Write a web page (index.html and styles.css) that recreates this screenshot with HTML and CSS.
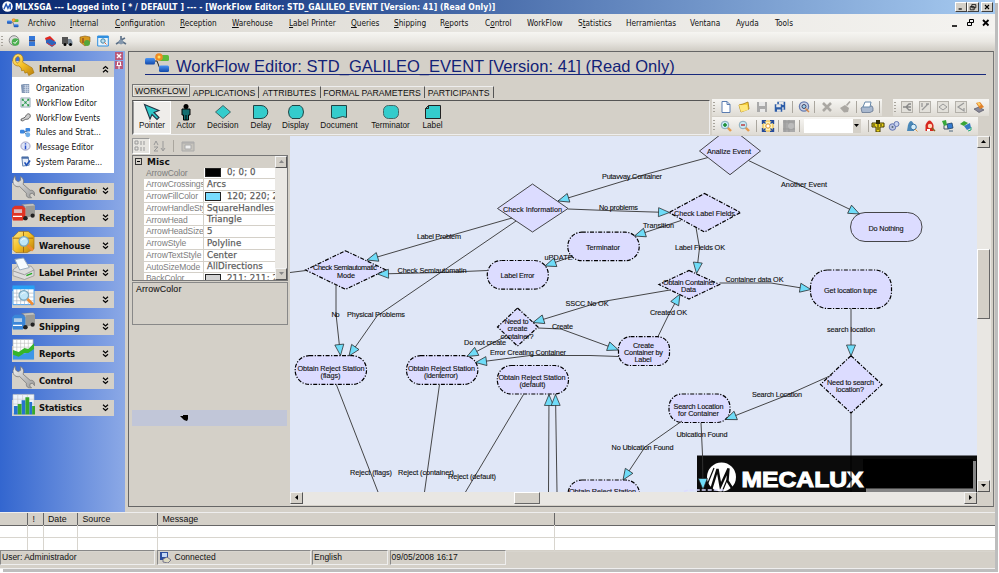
FILE: index.html
```html
<!DOCTYPE html>
<html lang="en">
<head>
<meta charset="utf-8">
<title>MLXSGA</title>
<link rel="stylesheet" href="styles.css">
</head>
<body>
<svg class="defs" width="0" height="0" aria-hidden="true">
  <defs>
    <linearGradient id="gold" x1="0" y1="0" x2="1" y2="1"><stop offset="0" stop-color="#ffe98a"/><stop offset=".5" stop-color="#f4bf25"/><stop offset="1" stop-color="#b87d0c"/></linearGradient>
    <linearGradient id="steel" x1="0" y1="0" x2="1" y2="1"><stop offset="0" stop-color="#f4f4f4"/><stop offset="1" stop-color="#999"/></linearGradient>
    <linearGradient id="blue" x1="0" y1="0" x2="0" y2="1"><stop offset="0" stop-color="#4a95f5"/><stop offset="1" stop-color="#1348a8"/></linearGradient>
    <symbol id="chev" viewBox="0 0 7 8"><path d="M1 .8 3.500 3 6 .8M1 4.300 3.500 6.500 6 4.300" fill="none" stroke="#000" stroke-width="1.200"/></symbol>
    <symbol id="flow" viewBox="0 0 25 20"><path d="M9 8h3l3 8h2" fill="none" stroke="#222" stroke-width="1"/><rect x="0" y="5" width="10" height="6.500" rx="1.500" fill="url(#blue)"/><rect x="14" y="12.500" width="10" height="6.500" rx="1.500" fill="url(#blue)"/><rect x="14" y="2" width="10" height="6" rx="1.500" fill="#5dba3b"/><circle cx="14" cy="4" r="3.800" fill="#f08a24"/><circle cx="14" cy="4" r="1.500" fill="#ffe060"/></symbol>
    <symbol id="wrench" viewBox="0 0 24 24"><path d="M3 0 4 5 6.500 6.500 9 5 9 1C12 3 13 6 11.500 9L19 15.500C22 15 24 17 23.500 21L21.500 18.500 19 19 18.500 21.500 20.500 23.500C16.500 24 14.500 22 15 18.500L8 11.500C4 12.500 1 10 1 5.500Z" fill="url(#steel)" stroke="#777" stroke-width=".8"/></symbol>
    <symbol id="lens" viewBox="0 0 24 24"><circle cx="10" cy="10" r="6" fill="#bfe6f8" stroke="#7aa6bd" stroke-width="1.600"/><path d="m14.500 14.500 7 7" stroke="#ef8b32" stroke-width="3.500"/><path d="m7 9c1-2 3-3 5-2" stroke="#fff" fill="none"/></symbol>
    <symbol id="truck" viewBox="0 0 24 18"><path d="M10 1 22 0 24 2V12L13 15V3Z" fill="#c4c4c0" stroke="#777" stroke-width=".5"/><path d="M14 3 24 2V12L14 15Z" fill="#9a9a96"/><path d="M0 5 3 2.500H11L14 5V15L11 18H1L0 14Z" fill="currentColor"/><path d="M2 6H10.500V10H2Z" fill="#d9e4ee" fill-opacity=".75"/><path d="M1 13.500H10.500" stroke="#fff" stroke-width="1.200"/><circle cx="14" cy="15.500" r="2.400" fill="#222"/><circle cx="21.500" cy="12.800" r="2.200" fill="#222"/></symbol>
    <symbol id="floppy" viewBox="0 0 12 12"><path d="M1 1H11V11H1Z" fill="currentColor"/><path d="M3 1H9V5H3ZM4 8H9V11H4Z" fill="#e8e8e8"/></symbol>
    <symbol id="chain" viewBox="0 0 12 12"><rect x=".5" y=".5" width="11" height="11" fill="#e2e0da" stroke="#b4b1aa"/></symbol>
    <symbol id="mag" viewBox="0 0 12 12"><path d="m7 7 4 4" stroke="#e69a4c" stroke-width="2.400"/><circle cx="5" cy="5" r="3.800" fill="#c7e8f2" stroke="#8ab" /></symbol>
    <symbol id="mlx" viewBox="0 0 12 12"><circle cx="6" cy="6" r="5.700" fill="#fff"/><path d="M2 9 4.500 3.500 6.500 8 9 3V9" fill="none" stroke="#2458b8" stroke-width="1.500"/></symbol>
  </defs>
</svg>
<div class="window">
  <header class="titlebar">
    <svg class="app-ico"><use href="#mlx"/></svg>
    <span class="caption">MLXSGA --- Logged into [ * / DEFAULT ] --- - [WorkFlow Editor: STD_GALILEO_EVENT [Version: 41] (Read Only)]</span>
    <span class="winbtns">
      <svg viewBox="0 0 11 10"><path d="M2.500 7.500h4" stroke="#000" stroke-width="1.500"/></svg>
      <svg viewBox="0 0 11 10"><path d="M4 2h5v4H4zM2 4.500h5v4H2z" fill="#d4d0c8" stroke="#000"/></svg>
      <svg viewBox="0 0 11 10"><path d="m3 2.500 5 5m0-5-5 5" stroke="#000" stroke-width="1.400"/></svg>
    </span>
  </header>

  <nav class="menubar">
    <svg class="menu-ico" viewBox="0 0 25 20"><use href="#flow"/></svg>
    <span>Archivo</span><span><u>I</u>nternal</span><span><u>C</u>onfiguration</span><span><u>R</u>eception</span><span><u>W</u>arehouse</span><span><u>L</u>abel Printer</span><span><u>Q</u>ueries</span><span><u>S</u>hipping</span><span>R<u>e</u>ports</span><span>C<u>o</u>ntrol</span><span>WorkFlow</span><span>S<u>t</u>atistics</span><span>Herramientas</span><span>Ventana</span><span>Ayuda</span><span>Tools</span>
    <svg class="mdi" viewBox="0 0 44 10"><path d="M3 8h5" stroke="#000" stroke-width="1.600"/><path d="M20.500 1.500h4v3h-4zM18.500 4.500h4v3h-4z" fill="#eee" stroke="#000"/><path d="m34 2 5.500 5.500m0-5.500-5.500 5.500" stroke="#000" stroke-width="1.800"/></svg>
  </nav>

  <div class="maintools">
    <i class="grip"></i>
    <svg viewBox="0 0 12 12"><circle cx="6" cy="5.500" r="4.800" fill="#ddd" stroke="#888"/><circle cx="7.500" cy="7" r="3.800" fill="#4caf50"/><path d="m5.500 7 1.500 1.500L9.500 5.500" stroke="#fff" fill="none"/></svg>
    <svg viewBox="0 0 12 12"><path d="M3 1h6v4.500H3zM3 6.500h6V11H3z" fill="#3477d8"/><path d="M3 5.800h6" stroke="#224"/></svg>
    <svg viewBox="0 0 12 12"><path d="m1 3 5-2 5 5-4 3-5-3z" fill="#e02820"/><path d="m2 5 4-1 6 3v2l-4 3-6-4z" fill="#2d64be"/><path d="m3 8 5 3 3-2" stroke="#d33" fill="none"/></svg>
    <svg viewBox="0 0 12 12"><path d="M1 2h6v7H1z" fill="#555"/><path d="M7 4h3l1.500 3v3H7z" fill="#7d8b9a"/><circle cx="4" cy="9.500" r="1.500"/><circle cx="9.500" cy="9.500" r="1.500"/></svg>
    <svg viewBox="0 0 12 12"><path d="m1 2 5-1 5 1v5L6 11 1 7z" fill="#d89a1e" stroke="#8a5a10" stroke-width=".6"/><path d="M4 3v5" stroke="#732"/><circle cx="8" cy="8" r="3" fill="#56a63a"/></svg>
    <svg viewBox="0 0 12 12"><path d="M.7 1h10.600v10H.7z" fill="#e8f4fc" stroke="#2f8fe0"/><path d="M.5 2h11" stroke="#2f8fe0" stroke-width="2"/><circle cx="6" cy="6" r="2.200" fill="#bde" stroke="#48a"/><path d="m7.500 7.500 2 2" stroke="#e63"/></svg>
    <svg viewBox="0 0 12 12"><path d="M6 1v5L1 9m5-3 5 3M6 5l4-2" stroke="#5a6f86" stroke-width="1.600" fill="none"/><circle cx="6" cy="7" r="2.400" fill="#8296ac"/></svg>
  </div>

  <div class="body">
    <aside class="sidebar">
      <div class="panels">
        <section class="panel open">
          <h2><svg class="big" viewBox="0 0 24 24"><path d="M7 0.500C11 1 12.500 5 11 9l10 6 2 5-5.500 3-1.500-3.500-2.500 1-1-3-2.500.5-.5-3-2.500-2C3 13.500-1 9 1.500 4 3 1 5 .5 7 .5ZM6.500 3C3 3.500 2.500 8 5.500 10 8.500 8.500 9 5 6.500 3Z" fill="url(#gold)" fill-rule="evenodd" stroke="#a8760c" stroke-width=".7"/></svg><b>Internal</b><svg class="chev up" viewBox="0 0 7 8"><use href="#chev"/></svg></h2>
          <ul>
            <li><svg viewBox="0 0 12 12"><path d="M1 2 4 1h6v10H2z" fill="#8297b5"/><path d="M4 3h6M4 5h6M4 7h6M4 9h6M6 2v9M8 2v9" stroke="#d8e2ef" stroke-width=".7"/></svg>Organization</li>
            <li><svg viewBox="0 0 12 12"><path d="M1 1h10v10H1z" fill="#dce9e4" stroke="#9ab"/><path d="m3 3 6 6M9 3 3 9" stroke="#6a9"/><path d="M2 2h2v2H2zM8 2h2v2H8zM5 5h2v2H5zM2 8h2v2H2zM8 8h2v2H8z" fill="#2b9b48"/></svg>WorkFlow Editor</li>
            <li><svg viewBox="0 0 12 12"><path d="M1 9c0-3 3-1 5-4 1-3 4-4 5-2s-1 5-4 5-3 3-6 1Z" fill="#ccc" stroke="#555"/></svg>WorkFlow Events</li>
            <li><svg viewBox="0 0 12 12"><path d="M3 5h5M4 5l4 4" stroke="#567"/><rect x="0" y="3" width="5" height="4" rx="1" fill="#3b86df"/><rect x="6" y="1" width="5" height="4" rx="1" fill="#3b86df"/><circle cx="8.500" cy="8.500" r="2.700" fill="#70aee8"/></svg>Rules and Strat...</li>
            <li><svg viewBox="0 0 12 12"><ellipse cx="6" cy="5.500" rx="5" ry="4.500" fill="#dfe6f8" stroke="#99b"/><path d="M6 2.500v1.300M6 4.800V9" stroke="#2649c8" stroke-width="1.600"/></svg>Message Editor</li>
            <li><svg viewBox="0 0 12 12"><path d="M2 1h7l1 9-7 1z" fill="#e8eef8" stroke="#5577a8"/><path d="M2 1h7v2H2z" fill="#4a6ea8"/><path d="m5 7 2 3 4-5" stroke="#1d50b8" stroke-width="1.800" fill="none"/></svg>System Parame...</li>
          </ul>
        </section>
        <section class="panel"><h2><svg class="big" viewBox="0 0 24 24"><use href="#wrench"/></svg><b>Configuration</b><svg class="chev" viewBox="0 0 7 8"><use href="#chev"/></svg></h2></section>
        <section class="panel"><h2><svg class="big red" viewBox="0 0 24 22"><use href="#truck" width="24" height="18"/></svg><b>Reception</b><svg class="chev" viewBox="0 0 7 8"><use href="#chev"/></svg></h2></section>
        <section class="panel"><h2><svg class="big" viewBox="0 0 24 24"><path d="m1 7 6-6 10 0 6 5v13l-7 4H4l-3-3z" fill="url(#gold)" stroke="#99690c" stroke-width=".6"/><path d="M1 8h21M12 1v22" stroke="#a06c10"/><use href="#lens" x="4" y="3" width="20" height="20"/></svg><b>Warehouse</b><svg class="chev" viewBox="0 0 7 8"><use href="#chev"/></svg></h2></section>
        <section class="panel"><h2><svg class="big" viewBox="0 0 24 24"><path d="m1 13 5-4h14l3 4v6l-10 4-12-4z" fill="#ddd" stroke="#888" stroke-width=".7"/><path d="m1 14 12 4 10-5" stroke="#999" fill="none"/><path d="m3 2 9-1.500 6 10-10 2.500z" fill="#f6fbff" stroke="#9ab"/><path d="m15 19 6-2.500" stroke="#2a2" stroke-width="1.500"/></svg><b>Label Printer</b><svg class="chev" viewBox="0 0 7 8"><use href="#chev"/></svg></h2></section>
        <section class="panel"><h2><svg class="big" viewBox="0 0 24 24"><path d="M1 3h22v18H1z" fill="#fff" stroke="#3e9df5"/><path d="M5 5v16M9 5v16M13 5v16M17 5v16M1 9h22M1 13h22M1 17h22" stroke="#a9b4c0" stroke-width=".7"/><path d="M.5 3h23" stroke="#28a0f4" stroke-width="4"/><use href="#lens" x="4" y="3" width="20" height="20"/></svg><b>Queries</b><svg class="chev" viewBox="0 0 7 8"><use href="#chev"/></svg></h2></section>
        <section class="panel"><h2><svg class="big sky" viewBox="0 0 24 22"><use href="#truck" width="24" height="18"/></svg><b>Shipping</b><svg class="chev" viewBox="0 0 7 8"><use href="#chev"/></svg></h2></section>
        <section class="panel"><h2><svg class="big" viewBox="0 0 24 24"><path d="M1 1h21v21H1z" fill="#fff" stroke="#aaa" stroke-width=".7"/><path d="M5 1v21M9 1v21M13 1v21M17 1v21M1 5h21M1 9h21" stroke="#bbb" stroke-width=".6"/><path d="m1 17 7-1 7-1 8-5v12H1z" fill="#3c96e8"/><path d="m1 12 6 2 6-4 4 1 6-6v6l-6 4-4 0-6 4-6-2z" fill="#35b52a"/></svg><b>Reports</b><svg class="chev" viewBox="0 0 7 8"><use href="#chev"/></svg></h2></section>
        <section class="panel"><h2><svg class="big" viewBox="0 0 24 24"><use href="#wrench"/></svg><b>Control</b><svg class="chev" viewBox="0 0 7 8"><use href="#chev"/></svg></h2></section>
        <section class="panel"><h2><svg class="big" viewBox="0 0 24 24"><path d="M1 2h22v20H1z" fill="#eef3fa" stroke="#bbb" stroke-width=".6"/><path d="M6 2v20M11 2v20M16 2v20M1 7h22M1 12h22" stroke="#c6c6c6" stroke-width=".6"/><path d="M2 14h4v9H2zM10 8h4v15h-4zM18 10h3v13h-3z" fill="#2673d0"/><path d="M6 12h4v11H6zM14 5h4v18h-4zM21 14h3v9h-3z" fill="#37a82c"/></svg><b>Statistics</b><svg class="chev" viewBox="0 0 7 8"><use href="#chev"/></svg></h2></section>
      </div>
      <div class="pins">
        <svg viewBox="0 0 8 8"><path d="m2 2 4 4m0-4-4 4" stroke="#fff" stroke-width="1.400"/></svg>
        <svg viewBox="0 0 8 8"><path d="M2.500 1v3.500h3V1M1.500 4.500h5M4 4.500V8M2.500 1h3" stroke="#fff" fill="none"/></svg>
      </div>
    </aside>

    <main class="editor">
      <div class="heading">
        <svg class="flow-ico" viewBox="0 0 25 20"><use href="#flow"/></svg>
        <h1>WorkFlow Editor: STD_GALILEO_EVENT [Version: 41] (Read Only)</h1>
      </div>
      <div class="tabs"><span class="on">WORKFLOW</span><span>APPLICATIONS</span><span>ATTRIBUTES</span><span>FORMAL PARAMETERS</span><span>PARTICIPANTS</span></div>

      <div class="strip">
        <div class="palette">
          <div class="on"><svg viewBox="0 0 18 18"><path d="M1.500 1.500 16 7.500l-5 2 5 5-2 2-5-5-2 4.500z" fill="#30c8c8" stroke="#234" stroke-width="1.100"/></svg>Pointer</div>
          <div><svg viewBox="0 0 18 18"><circle cx="9" cy="3.500" r="2.500"/><path d="M5 6h8v6h-1.500v5h-5v-5H5z" fill="#146e70" stroke="#000"/><path d="M9 12v5" stroke="#000"/></svg>Actor</div>
          <div><svg viewBox="0 0 18 18"><path d="m9 2.500 7.500 6.500L9 15.500 1.500 9z" fill="#33cccc" stroke="#466"/></svg>Decision</div>
          <div><svg viewBox="0 0 18 18"><path d="M1.500 2.500H9a6.800 6.500 0 0 1 0 13H1.500z" fill="#33cccc" stroke="#244"/></svg>Delay</div>
          <div><svg viewBox="0 0 18 18"><path d="M5 2.500h8q3.500 2 3.500 6.500T13 15.500H5Q1.500 13.500 1.500 9T5 2.500z" fill="#33cccc" stroke="#244"/></svg>Display</div>
          <div><svg viewBox="0 0 18 18"><path d="M1.500 2.500h15v12q-4-2-7.500 0t-7.500 0z" fill="#33cccc" stroke="#244"/></svg>Document</div>
          <div><svg viewBox="0 0 18 18"><rect x="1.500" y="2.500" width="15" height="13" rx="5" fill="#33cccc" stroke="#466"/></svg>Terminator</div>
          <div><svg viewBox="0 0 18 18"><path d="M4.500 2.500h12v13h-15v-10z" fill="#33cccc" stroke="#222"/><path d="M1.500 5.500h3v-3" fill="none" stroke="#222"/></svg>Label</div>
        </div>
        <div class="bars">
          <div class="bar">
            <div class="group g1"><i class="grip"></i>
              <svg viewBox="0 0 12 12"><path d="M2 .5h5l3 3v8H2z" fill="#fff" stroke="#5a7cb0"/><path d="M7 .5v3h3" fill="none" stroke="#5a7cb0"/></svg>
              <svg viewBox="0 0 12 12"><path d="m1 4 4-1 5-2 1 7-8 3z" fill="#f7d03a" stroke="#a67a10" stroke-width=".8"/><path d="m1 4 8 0 1 5-7 2z" fill="#ffe77a"/></svg>
              <svg class="grey" viewBox="0 0 12 12"><use href="#floppy"/></svg>
              <svg class="navy" viewBox="0 0 12 12"><use href="#floppy" x="2.500" y="0" width="9.500" height="9.500"/><use href="#floppy" x="0" y="2.500" width="9" height="9"/></svg>
              <i class="sep"></i>
              <svg class="n" viewBox="0 0 12 12"><circle cx="6" cy="5.500" r="4.600" fill="#cdd3e4" stroke="#667bb0" stroke-width="1.300"/><circle cx="6" cy="5.500" r="2" fill="#9bd0ee" stroke="#446"/><path d="m7.500 7.500 3.500 3.500" stroke="#d98b4c" stroke-width="1.500"/></svg>
              <i class="sep"></i>
              <svg viewBox="0 0 12 12"><path d="m2 2 8 8m0-8-8 8" stroke="#aaa7a2" stroke-width="2.600"/></svg>
              <svg viewBox="0 0 12 12"><path d="m11 .5-3.500 4" stroke="#aaa7a2" stroke-width="1.600"/><path d="m1 7 5-3 4 3-1 4-4 .5z" fill="#aaa7a2"/></svg>
              <i class="sep s"></i>
              <svg viewBox="0 0 14 12"><path d="m1 7 3-2h8l1 2v3l-3 1.500H2z" fill="#a9b8ce" stroke="#576a88" stroke-width=".7"/><path d="M5 1h6l-1 5H3z" fill="#fff" stroke="#68a"/></svg>
              <i class="sep"></i>
            </div>
            <div class="group g2"><i class="grip"></i>
              <svg viewBox="0 0 12 12"><use href="#chain"/><path d="M2 6h3M5 6l3-3h2M5 6h5M5 6l3 3h2" stroke="#888" stroke-width="1.300" fill="none"/></svg>
              <svg viewBox="0 0 12 12"><use href="#chain"/><path d="M3 2v4M3 9l6-6M7 3h3" stroke="#999" stroke-width="1.300" fill="none"/></svg>
              <svg viewBox="0 0 12 12"><use href="#chain"/><path d="m2 6 4-3 4 3-4 3z" stroke="#999" fill="none"/></svg>
              <svg viewBox="0 0 12 12"><use href="#chain"/><path d="m9 2-6 4 6 4V7" stroke="#999" stroke-width="1.200" fill="none"/></svg>
              <svg viewBox="0 0 12 12"><path d="m1 8 5-2 5 3-5 2.500z" fill="#889" stroke="#445" stroke-width=".6"/><path d="m3 2 4-1 4 5-4 2z" fill="#e0812a"/><path d="m4 2 2-1 2 3-2 1z" fill="#ffd06a"/></svg>
            </div>
          </div>
          <div class="bar">
            <div class="group g3"><i class="grip"></i>
              <svg viewBox="0 0 12 12"><use href="#mag"/><path d="M3 5h4M5 3v4" stroke="#178c2c" stroke-width="1.500"/></svg>
              <svg viewBox="0 0 12 12"><use href="#mag"/><path d="M3 5h4" stroke="#b22" stroke-width="1.300"/></svg>
              <i class="sep"></i>
              <svg class="n" viewBox="0 0 12 12"><path d="M1 1h10v10H1z" fill="#fff4b8" stroke="#e8b030"/><circle cx="6" cy="6" r="2.200" fill="#fff" stroke="#e0901e"/><path d="M.5 4V.5H4M8 .5h3.500V4M11.500 8v3.500H8M4 11.500H.5V8M1 1l2.500 2.500M11 1 8.500 3.500M1 11l2.500-2.500M11 11 8.500 8.500" fill="none" stroke="#244a9a" stroke-width="1.400"/></svg>
              <i class="sep"></i>
              <svg class="n" viewBox="0 0 12 12"><path d="M0 0h12v12H0z" fill="#aaa"/><path d="M0 2h12M0 9h12M2 0v12M6 0v12" stroke="#999"/><circle cx="8" cy="6" r="3" fill="#bcbcbc"/></svg>
              <i class="sep"></i>
              <span class="combo"><i></i><b><svg viewBox="0 0 7 5"><path d="M1 1h5L3.500 4z"/></svg></b></span>
              <i class="sep w"></i>
              <svg class="n" viewBox="0 0 12 12"><path d="M0 3h12v4H8v5H4V7H0z" fill="#e8d21c" stroke="#443b00"/><path d="M4 0h4v4H4z" fill="#332e08"/><path d="M2 4v2M6 4v6M9 4v2" stroke="#332e08"/></svg>
              <svg viewBox="0 0 12 12"><circle cx="4.500" cy="7" r="3.300" fill="#bac3e2" stroke="#6678b4"/><circle cx="8.500" cy="4" r="2.500" fill="#cbd5ef" stroke="#6678b4"/><circle cx="4.500" cy="7" r="1" fill="#567"/></svg>
              <svg viewBox="0 0 12 12"><path d="M2 5q3-8 6 0v6H1z" fill="#4a88b8"/><circle cx="7.500" cy="7" r="2.800" fill="#d5eefa" stroke="#3673a5"/><path d="m9 9 2.500 2.500" stroke="#d94"/></svg>
              <svg viewBox="0 0 12 12"><path d="M1.500 5q4-9 8 0v6h-8z" fill="#d7271e"/><circle cx="6" cy="6" r="2.200" fill="#ffd9b8"/><path d="M3 11V9h3v2z" fill="#fff"/><path d="m8 8 3 3" stroke="#862" stroke-width="1.500"/></svg>
              <svg viewBox="0 0 12 12"><path d="m0 1 4-1 1 5-3 1z" fill="#38a83a"/><path d="M2 5.500V9h4" stroke="#456" fill="none"/><path d="m5 4 5-1 1 5-5 1zM7 11h4" fill="#357bd0" stroke="#246" stroke-width=".8"/></svg>
              <svg viewBox="0 0 12 12"><path d="m0 4 4-3 4 2-4 3z" fill="#3aa437"/><path d="m4 6 6-3 1 5-4 2z" fill="#367ac4"/><path d="m8 11 3-1V7" stroke="#2a7" fill="none"/></svg>
            </div>
          </div>
        </div>
      </div>

      <div class="work">
        <div class="props">
          <div class="ptools">
            <span class="on"><svg viewBox="0 0 14 12"><path d="M1 1h3v3H1zM1 7h3v3H1z" fill="none" stroke="#999"/><path d="M6 2h2m1 0h2M6 4h2m1 0h2M6 8h2m1 0h2M6 10h2m1 0h2" stroke="#999"/></svg></span>
            <svg viewBox="0 0 14 12"><path d="m1 5 2-4 2 4M1 7h4l-4 4h4M10 1v9M8 8l2 3 2-3" stroke="#999" fill="none"/></svg>
            <i class="sep"></i>
            <svg viewBox="0 0 14 12"><path d="M1 2h12v9H1z" fill="#c6c3bc" stroke="#aaa"/><path d="M4 5h6v4H4zM1 3h12" fill="#eee" stroke="#aaa"/></svg>
          </div>
          <div class="grid">
            <div class="rows">
              <div class="cat"><i class="box"></i>Misc</div>
              <dl>
                <dt class="sel">ArrowColor</dt><dd><i class="sw black"></i>0; 0; 0</dd>
                <dt>ArrowCrossings</dt><dd>Arcs</dd>
                <dt>ArrowFillColor</dt><dd><i class="sw cyan"></i>120; 220; 255</dd>
                <dt>ArrowHandleStyle</dt><dd>SquareHandles</dd>
                <dt>ArrowHead</dt><dd>Triangle</dd>
                <dt>ArrowHeadSize</dt><dd>5</dd>
                <dt>ArrowStyle</dt><dd>Polyline</dd>
                <dt>ArrowTextStyle</dt><dd>Center</dd>
                <dt>AutoSizeMode</dt><dd>AllDirections</dd>
                <dt>BackColor</dt><dd><i class="sw lav"></i>211; 211; 211</dd>
              </dl>
            </div>
            <div class="vs"><b class="btn off"><svg viewBox="0 0 7 5"><path d="M1 4h5L3.500 1z"/></svg></b><b class="btn off"><svg viewBox="0 0 7 5"><path d="M1 1h5L3.500 4z"/></svg></b></div>
          </div>
          <div class="desc">ArrowColor</div>
          <div class="tray"><svg viewBox="0 0 9 8"><path d="M0 2h3l0-1h5v4L7 7 4 6 2 4z"/></svg></div>
        </div>

        <div class="canvas">
          <svg class="diagram" viewBox="290 136 687 356" width="687" height="356">
            <defs>
              <marker id="arr" markerUnits="userSpaceOnUse" markerWidth="14" markerHeight="14" refX="12" refY="6" orient="auto"><path d="M1 1.500 12 6 1 10.500z" fill="#6fdcf8" stroke="#222" stroke-width=".7"/></marker>
            </defs>
            <g class="node">
              <path d="M730 127 760.500 151 730 174.700 699.500 151Z"/>
              <path d="M532.500 184 568 208.500 532.500 232 497.500 208.500Z"/>
              <rect x="850.500" y="212.500" width="71.500" height="29" rx="14.500"/>
            </g>
            <g class="node dash">
              <path d="M704.500 193.500 740.500 212.500 704.500 232 669 212.500Z"/>
              <rect x="567.800" y="232.200" width="71.400" height="28.500" rx="14"/>
              <rect x="487.300" y="260.500" width="61" height="28.700" rx="14"/>
              <path d="M345.500 250.800 386 270 345.500 289.300 305.500 270Z"/>
              <path d="M689 270.500 719.500 284.500 689 299 659 284.500Z"/>
              <rect x="810.500" y="270" width="81" height="38.500" rx="17"/>
              <rect x="295.200" y="355.700" width="71.300" height="28.700" rx="14"/>
              <rect x="406.500" y="355.700" width="71.300" height="28.700" rx="14"/>
              <rect x="497.300" y="365.500" width="71.200" height="28.500" rx="14"/>
              <path d="M517.500 308 538 327 517.500 346 497.500 327Z"/>
              <rect x="618.500" y="336.700" width="51" height="28.800" rx="12"/>
              <path d="M851 355.700 882 384.500 851 413 820.500 384.500Z"/>
              <rect x="669" y="394" width="61" height="28.500" rx="13"/>
              <rect x="568" y="480" width="71.500" height="28.500" rx="14"/>
            </g>
            <g class="text">
              <text x="707" y="154" textLength="44">Analize Event</text>
              <text x="503" y="211.500" textLength="59">Check Information</text>
              <text x="674" y="216" textLength="61">Check Label Fields</text>
              <text x="586" y="249.500" textLength="34">Terminator</text>
              <text x="500.500" y="278" textLength="34">Label Error</text>
              <text x="313" y="270" textLength="64">Check Semiautomatic</text><text x="337" y="277.500" textLength="18">Mode</text>
              <text x="663" y="284.500" textLength="52">Obtain Container</text><text x="681" y="291.500" textLength="15">Data</text>
              <text x="868.500" y="230.500" textLength="35">Do Nothing</text>
              <text x="824" y="293" textLength="53">Get location tupe</text>
              <text x="297.500" y="370.500" textLength="67">Obtain Reject Station</text><text x="320.500" y="377.500" textLength="20">(flags)</text>
              <text x="408" y="370.500" textLength="67">Obtain Reject Station</text><text x="424" y="377.500" textLength="34">(identerror)</text>
              <text x="498.500" y="380" textLength="67">Obtain Reject Station</text><text x="519.500" y="387" textLength="26">(default)</text>
              <text x="504.500" y="324" textLength="24">Need to</text><text x="507.500" y="331" textLength="20">create</text><text x="500.500" y="338.500" textLength="33">container?</text>
              <text x="633" y="348" textLength="21">Create</text><text x="624" y="354.500" textLength="39">Container by</text><text x="634.500" y="361.500" textLength="17">Label</text>
              <text x="827" y="384.500" textLength="47">Need to search</text><text x="836" y="391.500" textLength="28">location?</text>
              <text x="673.500" y="409" textLength="50">Search Location</text><text x="678" y="415.500" textLength="41">for Container</text>
              <text x="569" y="494" textLength="67">Obtain Reject Station</text>
            </g>
            <g class="edge">
              <path d="M290 272.500 306 270.500"/>
              <path d="M336.300 384.500 378 492M439.500 384.500 424.500 492M523.500 394.500 465.500 492M851 413V492"/>
            </g>
            <g class="edge arrow">
              <path d="M708 157.500 645 174.500 558 201"/><path d="M748.500 160.500 859.500 214"/><path d="M568 209 620 211 669.500 212.500"/>
              <path d="M681 220.500 634.500 236"/><path d="M573 256 545 266"/><path d="M696 227.500 699.500 248 696.500 273.500"/>
              <path d="M670 290 600 302 533 322.500"/><path d="M719.500 283H771L811 289.500"/><path d="M851 308.500V356"/>
              <path d="M658 336.500 669 314 680 294"/><path d="M538 328 561 329 618.500 350"/><path d="M506 336 467 356.500"/>
              <path d="M619 356.500 590 355.500H530L475.500 362.500"/><path d="M512 218 442 238 367 260"/><path d="M516 221 377 316 349 356"/>
              <path d="M487.500 270.500 440 272.500 377.500 274"/><path d="M336 284V314L340.500 355.500"/><path d="M548.500 492 549 394.500"/><path d="M557 492 555.500 394.500"/>
              <path d="M832 375 785 396 725.500 419.500"/><path d="M682 421 645 447 623 480"/>
            </g>
            <g class="text">
              <text x="602" y="178.500" textLength="60">Putavvay Container</text>
              <text x="781" y="186.500" textLength="46">Another Event</text>
              <text x="599" y="210" textLength="39">No problems</text>
              <text x="643" y="227.500" textLength="31">Transition</text>
              <text x="544.500" y="260" textLength="28">uPDATE</text>
              <text x="675" y="250" textLength="50">Label Fields OK</text>
              <text x="417" y="238.500" textLength="44">Label Problem</text>
              <text x="397.500" y="272.500" textLength="69">Check Semiautomatin</text>
              <text x="565.500" y="306" textLength="43">SSCC No OK</text>
              <text x="725.500" y="282" textLength="58">Container data OK</text>
              <text x="650" y="314.500" textLength="37">Created OK</text>
              <text x="331.500" y="317" textLength="8">No</text><text x="347" y="317" textLength="58">Physical Problems</text>
              <text x="552" y="329" textLength="21">Create</text>
              <text x="464" y="345" textLength="42">Do not create</text>
              <text x="490" y="355" textLength="76">Error Creating Container</text>
              <text x="827" y="331.500" textLength="48">search location</text>
              <text x="752" y="397" textLength="50">Search Location</text>
              <text x="676.500" y="436.500" textLength="51">Ubication Found</text>
              <text x="611.500" y="449.500" textLength="62">No Ubication Found</text>
              <text x="350" y="474.500" textLength="42">Reject (flags)</text>
              <text x="398" y="474.500" textLength="56">Reject (container)</text>
              <text x="448" y="479" textLength="48">Reject (default)</text>
            </g>
            <g class="brand">
              <path d="M697 455.500H977V492H697Z" fill="#0b0b0b"/><path d="M863 459H973V488H863Z"/>
              <path d="M866 488.500H973V461H976V492H866Z" fill="#858585"/>
              <circle cx="721.500" cy="477" r="14.500" fill="#fff"/>
              <path d="M711 490 717.500 469 720.500 486 728.500 468.500 727.500 481 732 488" fill="none" stroke="#0b0b0b" stroke-width="2.400"/>
              <path d="M707.500 484 714 468M722 492 727 480" fill="none" stroke="#0b0b0b" stroke-width="1.200"/>
              <text x="741.500" y="486.500" textLength="122" lengthAdjust="spacingAndGlyphs">MECALUX</text>
              <path d="M851 456V492" stroke="#000"/>
            </g>
            <g class="edge arrow"><path d="M701 423 702.500 455 703 489.500"/></g>
            <path class="dashline" d="M684 491.500 688 490H724"/>
          </svg>
          <div class="vscroll"><b class="btn"><svg viewBox="0 0 7 5"><path d="M1 4h5L3.500 1z"/></svg></b><b class="thumb"></b><b class="btn end"><svg viewBox="0 0 7 5"><path d="M1 1h5L3.500 4z"/></svg></b></div>
          <div class="hscroll"><b class="btn"><svg viewBox="0 0 5 7"><path d="M4 1v5L1 3.500z"/></svg></b><b class="thumb"></b><b class="btn end"><svg viewBox="0 0 5 7"><path d="M1 1v5L4 3.500z"/></svg></b></div>
          <div class="corner"></div>
        </div>
      </div>
    </main>
  </div>

  <div class="log">
    <div class="lr head"><span></span><span>!</span><span>Date</span><span>Source</span><span>Message</span><span></span></div>
    <div class="lr"><span></span><span></span><span></span><span></span><span></span><span></span></div>
    <div class="lr"><span></span><span></span><span></span><span></span><span></span><span></span></div>
  </div>
  <footer class="status"><span>User: Administrador</span><span class="conn"><svg viewBox="0 0 12 12"><path d="M1 1h8v8H1z" fill="#2d4f9e"/><path d="M3 2h5v4H3z" fill="#c5d9f5"/><path d="m4 8 4-2 4 3-3 3-5-1z" fill="#dcd9c0" stroke="#557" stroke-width=".7"/></svg>Connected</span><span>English</span><span>09/05/2008 16:17</span></footer>
</div>
</body>
</html>
```
FILE: styles.css
```css
* { box-sizing: border-box; }
body { margin: 0; width: 999px; height: 573px; overflow: hidden; background: #fff; font-family: "Liberation Sans", Arial, sans-serif; font-size: 8.5px; color: #111; }
.defs { position: absolute; }
svg { display: block; flex: none; }
.window { width: 995px; height: 569px; background: #d4d0c8; display: flex; flex-direction: column; box-shadow: 3px 3px 0 #bdbdbd; }

.titlebar { height: 13.500px; flex: none; display: flex; align-items: center; padding: 0 2px 0 2px; background: linear-gradient(90deg, #0c2a70, #1d4088 25%, #5e82bb 60%, #a6caf0); color: #fff; }
.app-ico { width: 11px; height: 11px; margin-right: 2px; }
.caption { font: bold 8.500px "DejaVu Sans Condensed", "DejaVu Sans", sans-serif; font-stretch: condensed; white-space: nowrap; letter-spacing: .085px; }
.winbtns { margin-left: auto; display: flex; }
.winbtns svg { width: 12px; height: 10px; background: #d4d0c8; border: 1px solid; border-color: #fff #404040 #404040 #fff; }
.winbtns svg:last-child { margin-left: 2px; }

.menubar { height: 18.500px; flex: none; display: grid; grid-template-columns: 21px 42px 45px 65px 52px 57px 62px 43px 46px 45px 42px 51px 48px 64px 46px 39px 174px 44px; align-items: center; padding-left: 7px; background: linear-gradient(90deg, #dad7d0, #f4f3f0); font: 8.200px "DejaVu Sans Condensed", "DejaVu Sans", sans-serif; font-stretch: condensed; white-space: nowrap; }
.menu-ico { width: 12px; height: 10px; }
.mdi { width: 44px; height: 10px; }

.maintools { height: 18.500px; flex: none; display: flex; align-items: center; background: linear-gradient(#f6f5f2, #e9e7e2 50%, #d0ccc4); }
.maintools svg { width: 12px; height: 12px; margin-right: 5.800px; }
.grip { width: 2px; height: 11px; flex: none; background: repeating-linear-gradient(#a8a49c 0 1.500px, transparent 1.500px 3px); }
.maintools .grip { margin: 0 5px 0 1px; }

.body { height: 461px; flex: none; display: flex; }
.sidebar { width: 125px; flex: none; display: flex; padding-left: 12px; background: linear-gradient(90deg, #3366cf, #8ca9e6); }
.panels { width: 102px; padding-top: 10px; }
.panel { margin-bottom: 10.600px; }
.panel h2 { margin: 0; height: 16.500px; display: flex; align-items: center; background: #d4d0c8; font: bold 8.400px "DejaVu Sans", sans-serif; }
.panel h2 b { width: 58px; overflow: hidden; white-space: nowrap; margin: 0 5px 0 4px; letter-spacing: -.15px; }
.big { width: 23px; height: 24px; margin-top: -8px; }
.red { color: #e03424; }
.sky { color: #3a86d8; }
.chev { width: 7px; height: 8px; }
.chev.up { transform: scaleY(-1); }
.panel ul { margin: 0; padding: 4px 0 4px 8px; list-style: none; background: #fff; height: 95.500px; }
.panel li { height: 14.650px; display: flex; align-items: center; gap: 5px; font: 8.400px "DejaVu Sans Condensed", "DejaVu Sans", sans-serif; font-stretch: condensed; white-space: nowrap; }
.panel li svg { width: 11px; height: 11px; }
.pins { padding: 1px 0 0 1px; }
.pins svg { width: 8px; height: 8px; background: #b8587a; margin-bottom: 1.500px; }

.editor { width: 866px; flex: none; height: 456px; margin: 0 0 0 3px; border: 1.500px solid #666; border-right-color: #777; padding: 0 1px 0 3px; display: flex; flex-direction: column; }
.heading { height: 23px; flex: none; display: flex; margin: 0 6px 0 13px; border-bottom: 1px solid #17287c; }
.flow-ico { width: 25px; height: 20px; margin-top: 1px; }
h1 { margin: 6px 0 0 6px; font: 16.500px/17px "Liberation Sans", Arial, sans-serif; color: #122277; letter-spacing: .04px; white-space: nowrap; }
.tabs { display: flex; height: 15px; flex: none; margin-top: 9px; font-size: 8.700px; }
.tabs span { flex: none; height: 12px; margin-top: 2px; padding: 0; line-height: 13px; border-right: 1.500px solid #555; border-top: 1px solid #eee; white-space: nowrap; text-align: center; }
.tabs span:nth-child(2) { width: 69px; }
.tabs span:nth-child(3) { width: 61.500px; }
.tabs span:nth-child(4) { width: 104px; }
.tabs span:nth-child(5) { width: 69.500px; }
.tabs .on { width: 58px; height: 13px; margin-top: 0; border: 1px solid #777; outline: 1px solid #e8e6e0; outline-offset: -2px; padding: 0; line-height: 12px; }

.strip { height: 37px; flex: none; display: flex; }
.palette { width: 578px; flex: none; height: 35px; margin-top: 1px; border: 1px solid #666; border-color: #555 #eee #eee #666; display: grid; grid-template-columns: 38px 30px 43.500px 33px 36px 51px 52px 32px; font-size: 8.200px; }
.palette div { display: flex; flex-direction: column; align-items: center; padding-top: 2px; line-height: 10px; }
.palette svg { width: 18px; height: 18px; }
.palette .on { background: #efedea; border: 1px solid #fff; border-left-color: #999; padding-top: 1px; }
.bars { width: 280px; margin-left: 2px; }
.bar { height: 18.500px; display: flex; }
.group { display: flex; flex: none; align-items: center; height: 17.500px; background: linear-gradient(#f7f6f3, #dedbd4); padding-left: 1px; }
.g1 { width: 170px; }
.g2 { width: 96px; margin-left: 11px; }
.g3 { width: 266px; }
.group .grip { margin-right: 2px; }
.group svg { width: 18px; height: 12px; }
.group svg.n { width: 14px; }
.sep { width: 1px; height: 12px; margin: 0 3.300px; background: #aaa69e; flex: none; }
.sep.s { margin: 0 1.500px; }
.sep.w { margin: 0 2px 0 7px; }
.grey { color: #aaa; }
.navy { color: #2c5da8; }
.combo { display: flex; width: 57px; height: 14px; background: #fff; flex: none; }
.combo i { flex: 1; }
.combo b { width: 8px; background: #d4d0c8; display: flex; align-items: center; }
.group .combo svg { width: 7px; height: 5px; }

.work { display: flex; flex: 1; min-height: 0; }
.props { width: 158px; flex: none; padding-top: 1px; }
.ptools { height: 18px; display: flex; align-items: center; gap: 3px; }
.ptools svg { width: 14px; height: 12px; }
.ptools .on { background: #e6e4df; border: 1px solid #999; border-right-color: #fff; border-bottom-color: #fff; padding: 1px; }
.grid { width: 156px; height: 126px; border: 1px solid #777; display: flex; overflow: hidden; background: #d4d0c8; }
.rows { width: 142px; flex: none; }
.cat { height: 12px; display: flex; align-items: center; gap: 5px; font: bold 9px "DejaVu Sans", sans-serif; padding-left: 2px; }
.box { width: 7px; height: 7px; border: 1px solid #333; background: linear-gradient(#000, #000) center/3px 1px no-repeat; }
dl { margin: 0 0 0 11px; display: grid; grid-template-columns: 60px 71px; grid-auto-rows: 11.750px; white-space: nowrap; }
dt, dd { margin: 0; overflow: hidden; background: #fff; border-bottom: 1px solid #d4d0c8; line-height: 11px; }
dt { color: #7c7c7c; padding-left: 2px; border-right: 1px solid #d4d0c8; font-size: 8.500px; letter-spacing: -.1px; }
dt.sel { background: #d4d0c8; }
dd { color: #555; font: 8.600px/11px "DejaVu Sans", sans-serif; padding-left: 3px; letter-spacing: .15px; display: flex; align-items: center; -webkit-text-stroke: .25px #666; }
.sw { width: 16px; height: 9px; border: 1px solid #222; margin: 0 6px 0 -2px; flex: none; }
.black { background: #000; }
.cyan { background: #78dcff; }
.lav { background: #d3d3d3; }
.vs { width: 12px; background: #eae8e4; display: flex; flex-direction: column; justify-content: space-between; }
.btn { display: flex; align-items: center; justify-content: center; width: 13px; height: 12px; flex: none; background: #d4d0c8; border: 1px solid; border-color: #f4f4f4 #555 #555 #f4f4f4; }
.vs .btn { width: 12px; }
.btn svg { width: 7px; height: 5px; }
.btn.off svg { fill: #888; }
.desc { width: 156px; height: 43px; margin-top: 1.500px; border: 1px solid #888; padding: 1px 3px; font-size: 8.800px; line-height: 10px; letter-spacing: .15px; -webkit-text-stroke: .1px #333; }
.tray { width: 155px; height: 16px; margin-top: 85px; background: #c1c6d8; padding: 4px 0 0 48px; }
.tray svg { width: 9px; height: 8px; }

.canvas { width: 701px; flex: none; display: grid; grid-template-columns: 687px 14px; grid-template-rows: 356px 13px; align-content: start; }
.diagram { background: #e0e7f7; }
.node { fill: #dcdcff; stroke: #333; stroke-width: .9; }
.dash { stroke: #000; stroke-width: 1.200; stroke-dasharray: 4 1.500 1.200 1.500; }
.edge { fill: none; stroke: #333; stroke-width: .9; }
.arrow path { marker-end: url(#arr); }
.text { font: 7.300px "Liberation Sans", Arial, sans-serif; fill: #111; stroke: #111; stroke-width: .12px; }
.brand text { font: bold 21.500px "Liberation Sans", Arial, sans-serif; fill: #fff; stroke: #fff; stroke-width: 1px; }
.dashline { fill: none; stroke: #dcdcff; stroke-width: 1.500; stroke-dasharray: 4 2; }
.vscroll, .hscroll { background: #e9e7e3; display: flex; }
.vscroll { flex-direction: column; }
.vscroll .thumb { margin-top: 101px; width: 13px; height: 70px; }
.hscroll .thumb { margin-left: 211px; width: 26px; height: 12px; }
.thumb { background: #d4d0c8; border: 1px solid; border-color: #fff #666 #666 #fff; }
.vscroll .end { margin-top: auto; }
.hscroll .end { margin-left: auto; }
.hscroll .btn svg { width: 5px; height: 7px; }
.corner { background: #d4d0c8; }

.log { height: 38px; flex: none; background: #fff; border-top: 1px solid #eee; }
.lr { display: grid; grid-template-columns: 28px 15.500px 34.500px 80px 397px 1fr; height: 13.500px; }
.lr span { border-right: 1px solid #d8d5ce; border-bottom: 1px solid #d8d5ce; }
.lr span:last-child { border-right: 0; }
.head { height: 12px; font-size: 8.800px; line-height: 12px; background: #d4d0c8; }
.head span { border-right-color: #666; border-bottom-color: #666; padding-left: 4.500px; }
.status { flex: 1; display: grid; grid-template-columns: 155px 154px 76px 116px; gap: 1.500px; padding-bottom: 3px; font-size: 8.500px; border-bottom: 1px solid #eee; }
.status span { border: 1px solid; border-color: #888 #eee #eee #888; display: flex; align-items: center; padding-left: 1px; gap: 4px; }
.status svg { width: 12px; height: 12px; }
```
